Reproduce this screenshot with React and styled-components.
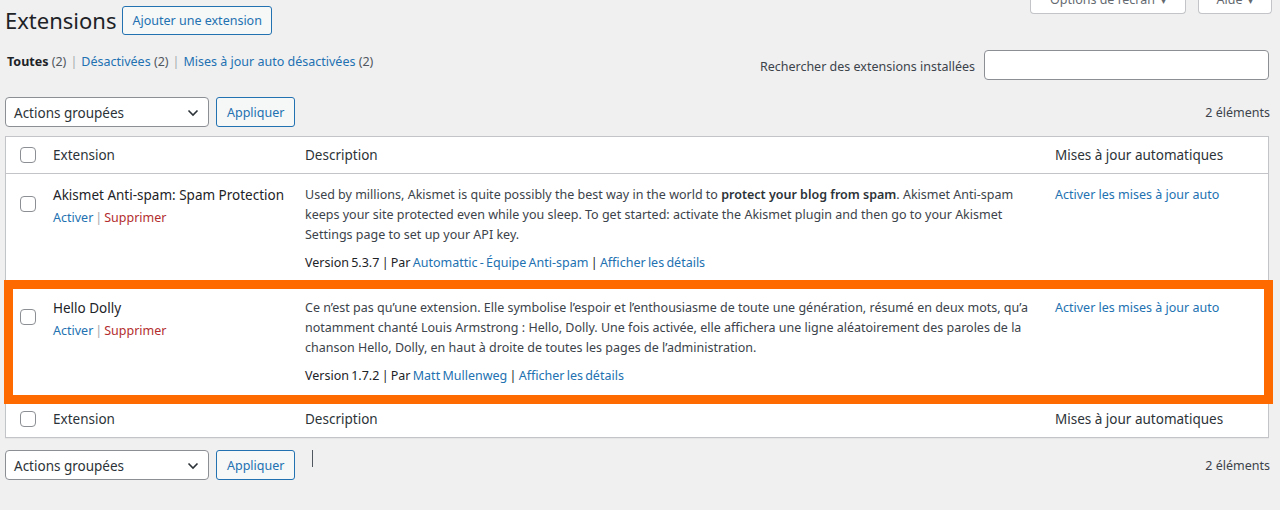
import React from "react";
import styled, { createGlobalStyle } from "styled-components";

const FONT = `"Noto Sans", "Liberation Sans", Arial, sans-serif`;

const GlobalStyle = createGlobalStyle`
  html, body {
    margin: 0;
    padding: 0;
    background: #f0f0f1;
    font-family: ${FONT};
    color: #3c434a;
    font-size: 12.5px;
    overflow: hidden;
  }
  * { box-sizing: border-box; }
`;

const plugins = [
  {
    id: "akismet",
    name: "Akismet Anti-spam: Spam Protection",
    desc: (
      <>
        Used by millions, Akismet is quite possibly the best way in the world to{" "}
        <strong>protect your blog from spam</strong>. Akismet Anti-spam keeps your site
        protected even while you sleep. To get started: activate the Akismet plugin and
        then go to your Akismet Settings page to set up your API key.
      </>
    ),
    version: "5.3.7",
    author: "Automattic - Équipe Anti-spam",
  },
  {
    id: "dolly",
    name: "Hello Dolly",
    desc: (
      <>
        Ce n’est pas qu’une extension. Elle symbolise l’espoir et l’enthousiasme de toute
        une génération, résumé en deux mots, qu’a notamment chanté Louis Armstrong : Hello,
        Dolly. Une fois activée, elle affichera une ligne aléatoirement des paroles de la
        chanson Hello, Dolly, en haut à droite de toutes les pages de l’administration.
      </>
    ),
    version: "1.7.2",
    author: "Matt Mullenweg",
    highlight: true,
  },
];

export default function App() {
  const renderRows = () =>
    plugins.map((p) => (
      <Row key={p.id} $highlight={p.highlight}>
        <CheckCell $body>
          <Check type="checkbox" />
        </CheckCell>
        <NameCell>
          <PluginName>{p.name}</PluginName>
          <RowActions>
            <Link href="#">Activer</Link>
            <Sep>|</Sep>
            <DeleteLink href="#">Supprimer</DeleteLink>
          </RowActions>
        </NameCell>
        <DescCell>
          <DescText>{p.desc}</DescText>
          <VersionLine>
            Version {p.version} | Par <Link href="#">{p.author}</Link> |{" "}
            <Link href="#">Afficher les détails</Link>
          </VersionLine>
        </DescCell>
        <AutoCell>
          <Link href="#">Activer les mises à jour auto</Link>
        </AutoCell>
      </Row>
    ));

  const renderHead = (footer) => (
    <HeadRow $footer={footer}>
      <CheckCell>
        <Check type="checkbox" />
      </CheckCell>
      <HeadCell>Extension</HeadCell>
      <HeadCell>Description</HeadCell>
      <HeadCell>Mises à jour automatiques</HeadCell>
    </HeadRow>
  );

  const renderNav = (bottom) => (
    <TableNav $bottom={bottom}>
      <Select>
        <span>Actions groupées</span>
        <svg width="12" height="8" viewBox="0 0 12 8">
          <path d="M1.5 1.5 L6 6 L10.5 1.5" fill="none" stroke="#2c3338" strokeWidth="1.6" />
        </svg>
      </Select>
      <SecondaryButton>Appliquer</SecondaryButton>
      {bottom && <Caret />}
      <Count>2 éléments</Count>
    </TableNav>
  );

  return (
    <>
      <GlobalStyle />
      <Wrap>
        <HeaderRow>
          <Title>Extensions</Title>
          <SecondaryButton $tall>Ajouter une extension</SecondaryButton>
          <MetaLinks>
            <MetaTab $w={156}>Options de l’écran <Arrow>▾</Arrow></MetaTab>
            <MetaTab $w={74}>Aide <Arrow>▾</Arrow></MetaTab>
          </MetaLinks>
        </HeaderRow>

        <FilterRow>
          <SubSub>
            <Current>Toutes</Current> <Num>(2)</Num>
            <Sep $wide>|</Sep>
            <Link href="#">Désactivées</Link> <Num>(2)</Num>
            <Sep $wide>|</Sep>
            <Link href="#">Mises à jour auto désactivées</Link> <Num>(2)</Num>
          </SubSub>
          <SearchBox>
            <SearchLabel>Rechercher des extensions installées</SearchLabel>
            <SearchInput type="search" />
          </SearchBox>
        </FilterRow>

        {renderNav(false)}

        <Table>
          {renderHead(false)}
          {renderRows()}
          {renderHead(true)}
        </Table>

        {renderNav(true)}
      </Wrap>
    </>
  );
}

const Wrap = styled.div`
  padding: 0 11px 0 5px;
`;

const HeaderRow = styled.div`
  display: flex;
  align-items: center;
  padding-top: 6px;
`;

const Title = styled.h1`
  margin: 0 6px 0 0;
  font-size: 22px;
  font-weight: 400;
  line-height: 29px;
  color: #1d2327;
`;

const SecondaryButton = styled.button`
  font-family: ${FONT};
  font-size: 12.5px;
  height: ${(p) => (p.$tall ? "29px" : "30px")};
  padding: 0 ${(p) => (p.$tall ? "9px" : "10px")};
  border: 1px solid #2271b1;
  border-radius: 3px;
  background: #f6f7f7;
  color: #2271b1;
  cursor: pointer;
  white-space: nowrap;
`;

const MetaLinks = styled.div`
  margin-left: auto;
  margin-right: -3px;
  align-self: flex-start;
  margin-top: -20px;
  display: flex;
  gap: 12px;
`;

const MetaTab = styled.button`
  width: ${(p) => p.$w}px;
  height: 28px;
  font-family: ${FONT};
  font-size: 12.5px;
  color: #646970;
  background: #fff;
  border: 1px solid #c3c4c7;
  border-top: none;
  border-radius: 0 0 4px 4px;
  padding: 0;
  display: flex;
  align-items: center;
  justify-content: center;
  gap: 6px;
`;

const Arrow = styled.span`
  font-size: 10px;
`;

const FilterRow = styled.div`
  display: flex;
  justify-content: space-between;
  align-items: flex-start;
  margin-top: 15px;
`;

const SubSub = styled.div`
  margin-top: 2px;
  padding-left: 2px;
  line-height: 20px;
  color: #646970;
`;

const Current = styled.strong`
  color: #1d2327;
  font-weight: 700;
`;

const Num = styled.span`
  color: #50575e;
`;

const Sep = styled.span`
  color: #a7aaad;
  margin: ${(p) => (p.$wide ? "0 4px" : "0 2px")};
`;

const Link = styled.a`
  color: #2271b1;
  text-decoration: none;
`;

const DeleteLink = styled(Link)`
  color: #b32d2e;
`;

const SearchBox = styled.div`
  display: flex;
  align-items: center;
  gap: 9px;
`;

const SearchLabel = styled.label`
  color: #3c434a;
  padding-top: 2px;
`;

const SearchInput = styled.input`
  width: 285px;
  height: 30px;
  border: 1px solid #8c8f94;
  border-radius: 4px;
  background: #fff;
  margin: 0;
`;

const TableNav = styled.div`
  display: flex;
  align-items: center;
  gap: 7px;
  height: 30px;
  margin: ${(p) => (p.$bottom ? "12px 0 0" : "17px 0 9px")};
`;

const Select = styled.div`
  width: 204px;
  height: 30px;
  border: 1px solid #8c8f94;
  border-radius: 4px;
  background: #fff;
  display: flex;
  align-items: center;
  justify-content: space-between;
  padding: 1px 9px 0 8px;
  font-size: 13.5px;
  color: #2c3338;
`;

const Caret = styled.span`
  width: 1px;
  height: 17px;
  background: #50575e;
  align-self: flex-start;
  margin: 0 0 0 10px;
`;

const Count = styled.span`
  margin-left: auto;
  margin-right: -1px;
  color: #3c434a;
`;

const Table = styled.div`
  background: #fff;
  border: 1px solid #c3c4c7;
  box-shadow: 0 1px 1px rgba(0, 0, 0, 0.04);
`;

const cols = `
  display: grid;
  grid-template-columns: 47px 252px 750px 1fr;
`;

const HeadRow = styled.div`
  ${cols}
  align-items: center;
  height: 37px;
  border-${(p) => (p.$footer ? "top" : "bottom")}: 1px solid #c3c4c7;
`;

const HeadCell = styled.div`
  font-size: 13.5px;
  color: #2c3338;
  line-height: 20px;
`;

const CheckCell = styled.div`
  padding-left: 14px;
  display: flex;
  align-self: ${(p) => (p.$body ? "start" : "center")};
  padding-top: ${(p) => (p.$body ? "11px" : "0")};
`;

const Check = styled.input`
  appearance: none;
  margin: 0;
  width: 16px;
  height: 16px;
  border: 1px solid #8c8f94;
  border-radius: 4px;
  background: #fff;
`;

const Row = styled.div`
  ${cols}
  position: relative;
  height: 113px;
  padding: 11px 0 0;
  line-height: 20px;

  ${(p) =>
    p.$highlight &&
    `
    &::after {
      content: "";
      position: absolute;
      top: -7px;
      left: -2px;
      right: -5px;
      bottom: -4px;
      border: 9px solid #fe6a00;
      pointer-events: none;
    }
  `}
`;

const NameCell = styled.div``;

const PluginName = styled.div`
  font-size: 13.5px;
  color: #1d2327;
  line-height: 20px;
`;

const RowActions = styled.div`
  margin-top: 3px;
  color: #a7aaad;
`;

const DescCell = styled.div`
  padding-right: 10px;
  color: #3c434a;
`;

const DescText = styled.p`
  margin: 0;
  strong {
    font-weight: 600;
    color: #2c3338;
  }
`;

const VersionLine = styled.div`
  margin-top: 8px;
  color: #1d2327;
  word-spacing: -1px;
`;

const AutoCell = styled.div``;
